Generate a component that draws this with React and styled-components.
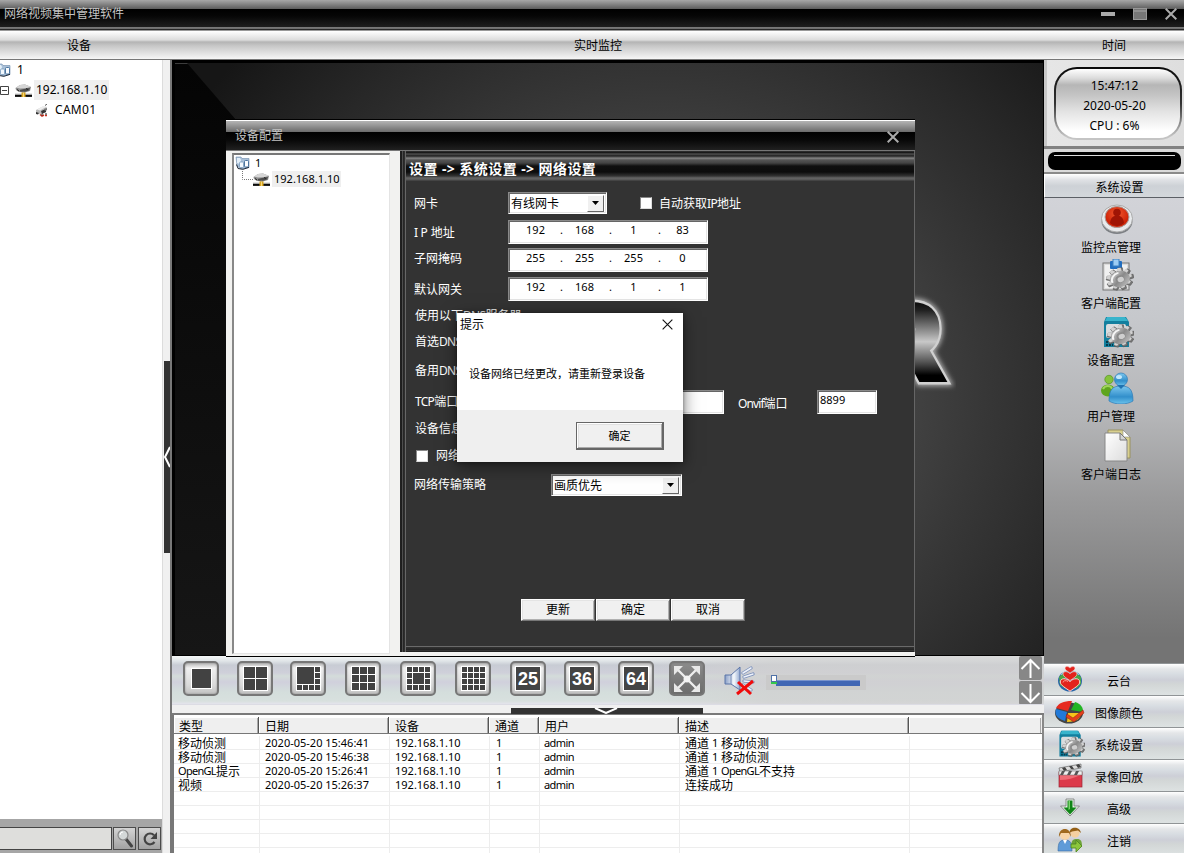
import React from "react";
import styled, { createGlobalStyle } from "styled-components";

const Global = createGlobalStyle`
  *, *::before, *::after { box-sizing: border-box; }
  body { margin: 0; overflow: hidden; }
  svg { display: block; flex: none; }
`;

const Shell = styled.div`
  width: 1184px;
  height: 853px;
  overflow: hidden;
  display: flex;
  flex-direction: column;
  position: relative;
  background: #fff;
  color: #000;
  font: 12px/14px "Noto Sans", "Noto Sans CJK SC", sans-serif;
  white-space: nowrap;
`;

/* ---------- top bars ---------- */
const TitleBar = styled.header`
  height: 31px;
  flex: none;
  display: flex;
  align-items: flex-start;
  justify-content: space-between;
  padding: 7px 7px 0 4px;
  color: #c4c4c4;
  background: linear-gradient(#a8a8a8 0, #5c5c5c 9px, #000 9px, #060606 16px, #1e1e1e 27px, #7c7c7c 27px, #6a6a6a 29px, #1c1c1c 29px, #333 30px, #999 30px);
`;
const WindowControls = styled.div`
  display: flex;
  gap: 18px;
  padding-top: 1px;
`;
const HeaderBar = styled.div`
  height: 29px;
  flex: none;
  display: flex;
  align-items: center;
  padding: 1px 0 0 1px;
  border-bottom: 1px solid #777;
  background: linear-gradient(#fff 0, #dcdcdc 9px, #b4b4b4 11px, #c8c8c8 15px, #f6f6f6 28px);
`;
const HeaderCell = styled.div`
  width: ${(p) => p.$w}px;
  flex: none;
  text-align: center;
`;
const Main = styled.div`
  display: flex;
  height: 793px;
`;

/* ---------- left column ---------- */
const LeftColumn = styled.aside`
  width: 172px;
  flex: none;
  display: flex;
`;
const LeftPanel = styled.div`
  width: 162px;
  display: flex;
  flex-direction: column;
`;
const Tree = styled.div`
  flex: 1;
`;
const TreeRow = styled.div`
  height: ${(p) => p.$h || 20}px;
  padding-left: ${(p) => p.$indent || 0}px;
  display: flex;
  align-items: center;
`;
const TreeLabel = styled.span`
  height: ${(p) => p.$h || 20}px;
  line-height: ${(p) => (p.$h || 20) - 1}px;
  padding: 0 2px;
  margin-left: ${(p) => p.$gap || 0}px;
  font-size: ${(p) => p.$size || 12}px;
  letter-spacing: ${(p) => p.$ls || 0}px;
  background: ${(p) => (p.$selected ? "#efefef" : "transparent")};
`;
const ClippedIcon = styled.span`
  margin-left: -4px;
`;
const DeviceSlot = styled.span`
  margin-left: 6px;
`;
const SearchBar = styled.div`
  height: 34px;
  padding: 8px 0 3px;
  display: flex;
  gap: 1px;
  background: #a6a6a6;
`;
const SearchField = styled.div`
  width: 112px;
  border: 1px solid #444;
  border-left: 0;
  background: #dededc;
`;
const SearchButton = styled.div`
  width: 23px;
  margin-right: 1px;
  border: 1px solid #4c4c4c;
  background: linear-gradient(#d4d4d4, #a2a2a2);
  display: flex;
  align-items: center;
  justify-content: center;
`;
const VSplitter = styled.div`
  width: 10px;
  background: #f0f0f0;
  border-left: 1px solid #dcdcdc;
  border-right: 2px solid #777;
  padding: 301px 0 0 1px;
`;
const VHandle = styled.div`
  width: 6px;
  height: 192px;
  background: #333;
  display: flex;
  align-items: center;
`;

/* ---------- centre column ---------- */
const Centre = styled.main`
  width: 872px;
  flex: none;
  display: flex;
  flex-direction: column;
`;
const Video = styled.div`
  height: 596px;
  flex: none;
  position: relative;
  border: 1px solid #000;
  border-width: 3px 1px 1px 3px;
  background: radial-gradient(ellipse 64% 88% at 56% 56%, #4c4c4c 0, #444 42%, #373737 58%, #282828 78%, #161616 100%);
  &::before {
    content: "";
    position: absolute;
    inset: 0;
    border-top: 1px solid #3c3c3c;
    background: linear-gradient(#040404, #161616);
    clip-path: polygon(0 0, 12px 0, 62px 58px, 62px 100%, 0 100%);
  }
`;
const Logo = styled.svg`
  position: absolute;
  left: 700px;
  top: 205px;
`;
const Toolbar = styled.div`
  height: 48px;
  flex: none;
  display: flex;
  align-items: flex-start;
  padding: 5px 0 0 11px;
  background:
    linear-gradient(90deg, transparent 450px, rgba(208, 208, 208, 0.75) 600px),
    linear-gradient(#f6f8f8 0, #e0e5e8 5px, #c8ccd4 9px, #cfd0da 17px, #d4dcda 20px, #d0d0dc 26px, #d4dedc 36px, #d8e0de 45px, #e4e4ec 48px);
`;
const LayoutButton = styled.div`
  width: 36px;
  height: 35px;
  flex: none;
  margin-right: ${(p) => p.$gap}px;
  border: 2px solid #777;
  border-radius: 5px;
  display: flex;
  align-items: center;
  justify-content: center;
  background: ${(p) => (p.$dark ? "linear-gradient(#8c8c8c, #6c6c6c)" : "linear-gradient(#b8b8b8 0, #f0f0f0 5px, #dadada 22px, #c2c2c2)")};
  box-shadow: inset 0 0 2px ${(p) => (p.$dark ? "#777" : "#888")};
`;
const CountTile = styled.span`
  width: 26px;
  height: 25px;
  border: 1px solid #fff;
  background: #444;
  color: #fff;
  font: bold 18px/24px "Liberation Sans", sans-serif;
  text-align: center;
`;
const MuteWrap = styled.span`
  padding-top: 4px;
`;
const Volume = styled.div`
  width: 100px;
  height: 15px;
  margin: 14px 0 0 11px;
  padding: 0 6px 0 5px;
  background: #cacaca;
  display: flex;
`;
const Scrollers = styled.div`
  margin: -5px 2px 0 auto;
  display: flex;
  flex-direction: column;
  gap: 1px;
`;
const ScrollerButton = styled.div`
  width: 23px;
  height: 24px;
  border-radius: 2px;
  background: #878787;
  display: flex;
  align-items: center;
  justify-content: center;
`;
const HSplitter = styled.div`
  height: 11px;
  flex: none;
  padding: 3px 0 0 339px;
  border-top: 1px solid #dcdce4;
  border-bottom: 2px solid #7a7a7a;
  background: #f0f0f0;
`;
const HHandle = styled.div`
  width: 192px;
  height: 6px;
  padding-right: 3px;
  background: #333;
  display: flex;
  justify-content: center;
`;
const LogTable = styled.div`
  flex: 1;
  border-left: 2px solid #777;
  border-right: 2px solid #888;
  background: #fff;
  padding-top: 2px;
  overflow: hidden;
`;
const LogHead = styled.div`
  display: flex;
  height: 17px;
  margin-bottom: 2px;
  background: #efefef;
  border-bottom: 1px solid #777;
`;
const HeadCell = styled.div`
  width: ${(p) => p.$w}px;
  padding-left: ${(p) => p.$pad || 6}px;
  line-height: 19px;
  flex: none;
  border-right: ${(p) => (p.$last ? 0 : 1)}px solid #555;
  box-shadow: inset 1px 1px #fff, inset -1px 0 #aaa;
`;
const LogRow = styled.div`
  display: flex;
  height: 14px;
  border-bottom: 1px solid #ededed;
  font-size: 11px;
`;
const LogCell = styled.div`
  width: ${(p) => p.$w}px;
  flex: none;
  padding-left: ${(p) => p.$pad || 5}px;
  border-right: 1px solid ${(p) => (p.$last ? "transparent" : "#ededed")};
  line-height: 14px;
`;
const Cjk = styled.span`
  font-size: 12px;
  line-height: 1px;
  vertical-align: -1px;
`;
const Tight = styled.span`
  letter-spacing: ${(p) => p.$ls || -0.7}px;
`;

/* ---------- right column ---------- */
const RightColumn = styled.aside`
  width: 140px;
  flex: none;
  display: flex;
  flex-direction: column;
`;
const ClockPanel = styled.div`
  height: 89px;
  flex: none;
  padding: 7px 2px 0 10px;
  background: linear-gradient(90deg, #c8c8c8 3px, #e6e6e6 3px, #dedede);
  border-bottom: 3px solid #828282;
`;
const Clock = styled.div`
  width: 128px;
  height: 73px;
  padding: 2px;
  border-radius: 23px;
  background: linear-gradient(#0a0a0a, #333 50%, #c4c4c4 95%);
`;
const ClockFace = styled.div`
  height: 69px;
  border-radius: 21px;
  padding: 7px 7px 0 0;
  line-height: 20px;
  text-align: center;
  background: linear-gradient(#fff 0, #dcdcdc 9px, #b6b6b6 16px, #c4c4c4 26px, #e2e2e2 42px, #fff 62px);
`;
const StatusStrip = styled.div`
  height: 25px;
  flex: none;
  padding: 3px 3px 0 4px;
  background: #dadada;
  border-bottom: 2px solid #8a8a8a;
`;
const StatusPill = styled.div`
  height: 18px;
  border-radius: 7px;
  background: #000;
  padding: 3px 6px;
  &::before {
    content: "";
    display: block;
    height: 1px;
    background: #ddd;
  }
`;
const SectionTitle = styled.div`
  height: 24px;
  flex: none;
  padding-left: 10px;
  line-height: 28px;
  text-align: center;
  border-bottom: 1px solid #5c6066;
  border-left: 1px solid #fff;
  background: linear-gradient(#fff 0, #dfe1e5 6px, #cdd1d6 12px, #d4d8dc);
`;
const ToolList = styled.nav`
  height: 465px;
  flex: none;
  display: flex;
  flex-direction: column;
  align-items: center;
  padding: 5px 6px 0 0;
  background: linear-gradient(#d2d3d8 0, #c6c8cc 120px, #b4b5b7 220px, #9a9a9b 300px, #747474 440px, #747474);
`;
const ToolItem = styled.div`
  height: 56.4px;
  display: flex;
  flex-direction: column;
  align-items: center;
  gap: 6px;
  & > svg { margin-left: 12px; }
`;
const MenuItem = styled.div`
  height: 32px;
  flex: none;
  display: flex;
  align-items: center;
  padding-left: 9px;
  border-top: 1px solid #909496;
  background: linear-gradient(#fff 0, #e4e6e8 5px, #d8dde2 10px, #cdcfd7 16px, #d2d6d6 20px, #dde2e2);
`;
const MenuText = styled.span`
  width: 64px;
  margin-top: 4px;
  text-align: center;
`;
const MenuIcon = styled.span`
  width: 34px;
  display: flex;
  justify-content: center;
`;

/* ---------- device dialog ---------- */
const Dialog = styled.section`
  position: absolute;
  left: 226px;
  top: 119px;
  width: 689px;
  height: 538px;
  display: flex;
  flex-direction: column;
  background: #f2f2f0;
  border-top: 1px solid #000;
  border-bottom: 1px solid #000;
`;
const DialogTitle = styled.div`
  height: 31px;
  flex: none;
  display: flex;
  justify-content: space-between;
  padding: 9px 16px 0 9px;
  color: #c4c4c4;
  background: linear-gradient(#fff 0, #fff 1px, #b4b4b4 1px, #6a6a6a 12px, #000 12px, #080808 20px, #202020 30px, #777 30px);
`;
const CloseSlot = styled.span`
  padding-top: ${(p) => p.$top || 2}px;
`;
const DialogBody = styled.div`
  flex: 1;
  display: flex;
`;
const DialogTree = styled.div`
  width: 158px;
  height: 501px;
  flex: none;
  margin: 2px 10px 0 6px;
  background: #fff;
  border: 1px solid #e4e4e4;
  border-left: 2px solid #888;
  border-top: 2px solid #777;
`;
const Form = styled.div`
  flex: 1;
  height: 501px;
  padding-left: 5px;
  background: linear-gradient(90deg, #222 0, #1c1c1c 2px, #555 2px, #444 3px, #222 3px, #333 5px);
  border-right: 1px solid #666;
`;
const FormInner = styled.div`
  height: 501px;
  display: flex;
  flex-direction: column;
  border-left: 1px solid #666;
  background:
    linear-gradient(#6a6a6a 0, #6a6a6a 1px, #333 1px, #222 4px, #555 4px, #111 5px, #333 6px) 0 495px / 100% 6px no-repeat,
    #333;
`;
const FormHeading = styled.div`
  height: 30px;
  flex: none;
  padding: 9px 0 0 3px;
  line-height: 18px;
  font-size: 14px;
  font-weight: bold;
  letter-spacing: 0.43px;
  color: #fff;
  background: linear-gradient(#333 0, #111 2px, #666 3px, #222 4px, #444 6px, #8a8a8a 7px, #555 9px, #444 12px, #101010 15px, #0c0c0c 21px, #333 25px, #666 27px, #555 29px, #333 30px);
`;
const FormRow = styled.div`
  height: ${(p) => p.$h}px;
  margin-top: ${(p) => p.$mt || 0}px;
  flex: none;
  display: flex;
  align-items: center;
  padding-left: 8px;
  color: #fff;
`;
const Label = styled.span`
  width: ${(p) => p.$w}px;
  margin-left: ${(p) => p.$ml || 0}px;
  margin-top: ${(p) => p.$mt || 0}px;
  flex: none;
`;
const Field = styled.div`
  width: ${(p) => p.$w}px;
  height: 24px;
  flex: none;
  display: flex;
  align-items: center;
  padding: 0 1px 4px 2px;
  color: #000;
  background: #fff;
  border: 1px solid #fff;
  border-top-color: #8a8a8a;
  border-left-color: #8a8a8a;
  box-shadow: inset 1px 1px #666, inset -1px -1px #e4e4e4;
  font-size: 11px;
`;
const Octet = styled.span`
  width: 49px;
  flex: none;
  text-align: center;
  position: relative;
  &:not(:last-child)::after {
    content: ".";
    position: absolute;
    right: -3px;
  }
`;
const Select = styled.div`
  width: ${(p) => p.$w}px;
  height: 22px;
  flex: none;
  display: flex;
  align-items: center;
  justify-content: space-between;
  padding: 1px 2px 1px 2px;
  color: #000;
  background: #fff;
  border: 1px solid #fff;
  border-top-color: #8a8a8a;
  border-left-color: #8a8a8a;
  box-shadow: inset 1px 1px #666, inset -1px -1px #e4e4e4;
`;
const SelectText = styled.span`
  padding-top: 2px;
`;
const SelectArrow = styled.span`
  width: 17px;
  height: 17px;
  display: flex;
  align-items: center;
  justify-content: center;
  background: #f0f0f0;
  border: 1px solid #fff;
  border-right-color: #666;
  border-bottom-color: #666;
`;
const Check = styled.span`
  width: 12px;
  height: 12px;
  flex: none;
  margin-left: ${(p) => p.$ml || 0}px;
  background: #fff;
  border: 1px solid #888;
  border-right-color: #ddd;
  border-bottom-color: #ddd;
`;
const ButtonRow = styled.div`
  display: flex;
  gap: 1px;
  margin: 101px 0 0 115px;
`;
const FormButton = styled.button`
  width: 74px;
  height: 22px;
  padding: 0;
  font: inherit;
  line-height: 20px;
  color: #000;
  background: #f0f0f0;
  border: 1px solid #fff;
  border-right-color: #666;
  border-bottom-color: #777;
  border-radius: 0;
  box-shadow: inset 1px 1px #e4e4e4, inset -1px -1px #b0b0b0;
`;

/* ---------- message box ---------- */
const MessageBox = styled.section`
  position: absolute;
  left: 457px;
  top: 313px;
  width: 226px;
  height: 149px;
  display: flex;
  flex-direction: column;
  background: #fff;
  box-shadow: 0 4px 16px rgba(0, 0, 0, 0.5), 0 0 4px rgba(0, 0, 0, 0.4);
`;
const MessageTitle = styled.div`
  display: flex;
  justify-content: space-between;
  padding: 5px 10px 0 3px;
`;
const MessageText = styled.p`
  flex: 1;
  margin: 0;
  padding: 35px 0 0 12px;
  font-size: 11px;
`;
const MessageFooter = styled.div`
  height: 52px;
  padding: 12px 19px 0 0;
  display: flex;
  justify-content: flex-end;
  background: #efefef;
`;
const MessageButton = styled.button`
  width: 88px;
  height: 28px;
  padding: 0;
  font: inherit;
  font-size: 11px;
  color: #000;
  background: #f0f0f0;
  border: 1px solid #666;
  border-right-width: 2px;
  border-bottom-width: 2px;
  border-radius: 0;
  box-shadow: inset 1px 1px #fff, inset -1px -1px #aaa, inset 2px 2px #e0e0e0;
`;

/* ---------- icons ---------- */
const CloseIcon = ({ size = 12, color = "#aaa", w = 2 }) => (
  <svg width={size} height={size} viewBox="0 0 12 12">
    <path d="M.7 .7 11.3 11.3M11.3 .7.7 11.3" stroke={color} strokeWidth={w} fill="none" />
  </svg>
);
const GroupIcon = () => (
  <svg width="15" height="14" viewBox="0 0 15 14">
    <path d="M1 1h5l1 1.500h7v9l-8 1.500-4-3z" fill="#a9c0d8" stroke="#6f8cab" strokeWidth=".6" />
    <path d="M2 2h3l1 2-1 4-3-1z" fill="#e2eef8" />
    <rect x="4.500" y="6" width="4" height="5.500" rx="1" fill="#f2f8fd" stroke="#6c8fb5" strokeWidth=".7" />
    <rect x="9.500" y="4.500" width="4" height="6.500" rx="1" fill="#fbfdff" stroke="#3d6a96" strokeWidth=".9" />
    <path d="M1.500 8.500 3 12.500l5 .8 6-2" stroke="#1f2a38" fill="none" />
  </svg>
);
const DeviceIcon = () => (
  <svg width="17" height="15" viewBox="0 0 17 15">
    <path d="M.5 5 5 2l5-.5 6 2.500-1 4-5 1.500-6-.5-3-2z" fill="#8d8d8d" />
    <path d="M1 4.500 5 2l5-.5 6 2.300-5 1.400-6 .3z" fill="#d6d6d6" />
    <path d="m5 7 4-1 6-1-1 2.500-5 1.500-4-.5z" fill="#4c4c4c" />
    <path d="M2 6.500 4 8M11 5.500l2 1" stroke="#222" />
    <path d="M8.500 8.500v3" stroke="#888" strokeWidth="2" />
    <path d="M0 11h17" stroke="#c9c9c9" strokeWidth="1" />
    <path d="M0 12.800h17" stroke="#0c0c0c" strokeWidth="2.200" />
    <rect x="6.500" y="9.500" width="4" height="4.500" fill="#d9a520" />
    <path d="M8.500 9.500V14" stroke="#f5d77a" />
  </svg>
);
const CameraIcon = () => (
  <svg width="14" height="13" viewBox="0 0 14 13">
    <path d="m1 6 7-3.500 4 1L11 8l-6 2-4-1.500z" fill="#b9b9b9" />
    <path d="m2 5.500 6-3.500 4 .5-7 4z" fill="#ededed" />
    <path d="m10 1.500 2-1.500" stroke="#555" />
    <path d="m6 7 5-2v3l-4 2zM1 8l3 1-1 1.500L1 10z" fill="#333" />
    <path d="m9 5 3-1v2l-2 1z" fill="#777" />
    <path d="M5 10.500 7 12l2-1M10 11.500h2" stroke="#c8321f" strokeWidth="1.500" fill="none" />
    <path d="M7 9.500v2M11 9v2" stroke="#222" />
  </svg>
);
const ExpandIcon = () => (
  <svg width="9" height="9" viewBox="0 0 9 9">
    <path d="M.5 .5h8v8h-8zM2 4.500h5" fill="none" stroke="#444" />
  </svg>
);
const SearchIcon = () => (
  <svg width="18" height="19" viewBox="0 0 18 19">
    <path d="m10 10 5.500 7" stroke="#444" strokeWidth="3" strokeLinecap="round" />
    <circle cx="7" cy="6" r="5" fill="#d4d8d8" stroke="#888" strokeWidth="1.200" />
    <path d="M4 6a3 3 0 0 1 3-3" stroke="#fff" fill="none" />
  </svg>
);
const RefreshIcon = () => (
  <svg width="16" height="16" viewBox="0 0 16 16">
    <path d="M12.500 11A5.400 5.400 0 1 1 12 4.200" fill="none" stroke="#444" strokeWidth="2.200" />
    <path d="M15 1v7H8.500z" fill="#444" />
  </svg>
);
const rect = (x, y, w, h) => ({ x, y, w, h });
const uniform = (n, size) => {
  const out = [];
  const cell = (size - (n - 1)) / n;
  for (let r = 0; r < n; r++)
    for (let c = 0; c < n; c++) out.push(rect(c * (cell + 1), r * (cell + 1), cell, cell));
  return out;
};
const eight = [rect(0, 0, 17, 17)];
const thirteen = [rect(6, 6, 11, 11)];
for (let i = 0; i < 4; i++) {
  eight.push(rect(i * 6, 18, 5, 5));
  if (i < 3) eight.push(rect(18, i * 6, 5, 5));
  thirteen.push(rect(i * 6, 0, 5, 5), rect(i * 6, 18, 5, 5));
  if (i === 1 || i === 2) thirteen.push(rect(0, i * 6, 5, 5), rect(18, i * 6, 5, 5));
}
const GridIcon = ({ cells, size = 23 }) => (
  <svg width={size + 2} height={size + 2} viewBox={`0 0 ${size + 2} ${size + 2}`}>
    <rect width={size + 2} height={size + 2} fill="#fff" />
    {cells.map((c, i) => (
      <rect key={i} x={c.x + 1} y={c.y + 1} width={c.w} height={c.h} fill="#424242" />
    ))}
  </svg>
);
const FullscreenIcon = () => (
  <svg width="30" height="28" viewBox="0 0 30 28">
    <path d="m5 4 20 20M25 4 5 24" stroke="#eee" strokeWidth="2.400" />
    <path d="M2 1h9L8 4 5 7 2 10zM28 1h-9l3 3 3 3 3 3zM2 27h9l-3-3-3-3-3-3zM28 27h-9l3-3 3-3 3-3z" fill="#e8e8e8" />
    <circle cx="15" cy="14" r="3.500" fill="#f4f4f4" />
  </svg>
);
const MuteIcon = () => (
  <svg width="32" height="32" viewBox="0 0 32 32">
    <defs>
      <linearGradient id="spk" x2="1"><stop stopColor="#8ba0c8" /><stop offset=".6" stopColor="#f5f8fc" /><stop offset="1" stopColor="#93a9d0" /></linearGradient>
    </defs>
    <path d="M2 10h6l9-8v23l-9-6H2z" fill="url(#spk)" stroke="#5b75a8" />
    <path d="M8 10v9" stroke="#7288b4" />
    <path d="m20 8 8-5M21 12l9-3M21 16l9 1M20 20l8 5" stroke="#7b90ba" strokeWidth="3.200" strokeLinecap="round" />
    <path d="m20 8 8-5M21 12l9-3M21 16l9 1M20 20l8 5" stroke="#eef2fa" strokeWidth="1.500" strokeLinecap="round" />
    <path d="m15 17 13 12M30 16 14 29" stroke="#f00b0b" strokeWidth="3" />
  </svg>
);
const SliderArt = () => (
  <svg width="90" height="15" viewBox="0 0 90 15">
    <rect x="5" y="5" width="84" height="6" fill="#4166b4" />
    <path d="M5 5.500h84" stroke="#7892cc" />
    <rect x=".5" y=".5" width="5" height="6" fill="#fff" stroke="#4f72a8" />
    <rect x="0" y="7" width="6" height="2" fill="#35c84c" />
  </svg>
);
const ArrowIcon = ({ down }) => (
  <svg width="21" height="21" viewBox="0 0 21 21">
    <path d={down ? "M10.500 1v18M1.500 10l9 9 9-9" : "M10.500 20V2M1.500 11l9-9 9 9"} stroke="#fff" strokeWidth="2" fill="none" />
  </svg>
);
const gearTeeth = Array.from({ length: 9 }, (_, i) => i * 40);
const Gear = ({ x, y, r = 9 }) => (
  <g transform={`translate(${x} ${y}) rotate(-14) scale(${r / 10} ${r / 12.5})`}>
    {gearTeeth.map((a) => (
      <path key={a} d="M-2.400-7-1.800-11H1.800L2.400-7z" transform={`rotate(${a + 12})`} fill="#777" stroke="#555" strokeWidth=".5" />
    ))}
    {gearTeeth.map((a) => (
      <path key={a} d="M-2.200-7-1.400-10.300H1.200L2-7z" transform={`translate(-.6 -1) rotate(${a + 12})`} fill="#d2d2d2" />
    ))}
    <circle r="8" fill="url(#metal)" />
    <path d="M-6.500 2A7 7 0 0 1 0-6.500" stroke="#f6f6f6" strokeWidth="1.600" fill="none" />
    <circle r="3.600" fill="#8a8a8a" />
    <circle cx=".5" cy=".6" r="2.600" fill="#cfcfcf" />
  </g>
);
const MonitorIcon = () => (
  <svg width="34" height="32" viewBox="0 0 34 32">
    <ellipse cx="17" cy="18" rx="15.500" ry="13" fill="#7d8084" />
    <ellipse cx="17" cy="15.500" rx="15.500" ry="13.500" fill="#e8eaec" stroke="#aaa" />
    <ellipse cx="17" cy="14" rx="12" ry="10.500" fill="url(#redg)" stroke="#a7a09e" />
    <circle cx="17" cy="9.500" r="3.800" fill="#a01505" />
    <path d="M10 20c1-7 4-7 7-7s6 0 7 7c-4 4-10 4-14 0z" fill="#a01505" />
  </svg>
);
const ClientConfigIcon = () => (
  <svg width="34" height="32" viewBox="0 0 34 32">
    <rect x="3" y="4" width="26" height="27" fill="#dcdcdc" stroke="#777" />
    <rect x="5" y="6" width="22" height="23" fill="#f0f0f0" />
    <rect x="10" y="2" width="12" height="8" rx="1" fill="#226ec0" />
    <rect x="13" y="0" width="6" height="7" fill="#9cccf4" stroke="#3c80c0" />
    <Gear x={20} y={20} r={12.5} />
  </svg>
);
const DeviceConfigIcon = ({ size = 34 }) => (
  <svg width={size} height={size * 0.94} viewBox="0 0 34 32">
    <path d="M4 6 6 1h20l3 5v25H4z" fill="#137f9e" />
    <path d="M5 5 7 1h18l3 4z" fill="#38b4cc" />
    <rect x="6" y="8" width="20" height="14" rx="2" fill="#dadddf" />
    <path d="M6 26h9M6 29h7" stroke="#063a4c" strokeWidth="2" strokeDasharray="2 1" />
    <Gear x={21} y={20} r={12.5} />
  </svg>
);
const UsersIcon = () => (
  <svg width="34" height="32" viewBox="0 0 34 32">
    <ellipse cx="8" cy="18.500" rx="7" ry="6" fill="#5ea51e" />
    <path d="M3 17c2-4 8-4 9 0" stroke="#9fd45c" strokeWidth="2" fill="none" />
    <circle cx="9" cy="7.500" r="4.200" fill="#85c33c" stroke="#4c8b1a" strokeWidth=".6" />
    <path d="M9 29c0-12 4-15 12-15s12 3 12 15c-6 4-18 4-24 0z" fill="url(#blueg)" stroke="#2b7ab8" strokeWidth=".7" />
    <circle cx="21" cy="7.500" r="6.500" fill="url(#blueg)" stroke="#2b7ab8" strokeWidth=".7" />
    <path d="m17 13 4 4 4-4" fill="#1f72b0" />
    <ellipse cx="19" cy="5" rx="3" ry="2" fill="#c3e8fb" />
  </svg>
);
const DocsIcon = () => (
  <svg width="34" height="33" viewBox="0 0 34 33">
    <path d="M8 1h15l7 7v21H8z" fill="#d8cf8e" stroke="#9a925e" />
    <path d="M23 1v7h7z" fill="#fff" stroke="#888" strokeWidth=".6" />
    <path d="M5 4h15l7 7v21H5z" fill="url(#paper)" stroke="#888" />
    <path d="M20 4v7h7z" fill="#d4d4d4" stroke="#777" />
  </svg>
);
const HeartGlobeIcon = () => (
  <svg width="26" height="27" viewBox="0 0 26 27">
    <ellipse cx="13" cy="15" rx="12" ry="10.500" fill="#2a66a8" />
    <path d="m2 11 5-5 3 4-4 6 3 7-6-4zM18 6l6 5v7l-5 5-2-7z" fill="#4aa548" />
    <path d="M4 9c3-5 14-6 18 0" stroke="#8fc4e8" fill="none" />
    {[[0.5, 1], [5.5, 1.4], [12.5, 1.95]].map(([y, s]) => (
      <path key={y} transform={`translate(13 ${y}) scale(${s})`} d="M0 6.500C-2 5-5 3.500-5 1.800-5-.2-2-.6 0 1.600 2-.6 5-.2 5 1.800 5 3.500 2 5 0 6.500z" fill="#e3231c" stroke="#ffd9d4" strokeWidth=".5" />
    ))}
    <path d="M6 16.500c0-2 3-2.500 5-1" stroke="#ff9a90" fill="none" />
  </svg>
);
const PaletteIcon = () => (
  <svg width="30" height="24" viewBox="0 0 30 24">
    <ellipse cx="14" cy="13" rx="14" ry="10.500" fill="#444" />
    <path d="M13 11 1 8C4 3 8 1 17 1z" fill="#e62a20" />
    <path d="m16 10 4-8c6 2 8 5 8 10z" fill="#22b524" />
    <path d="M12 12 1 9c-2 6 2 10 9 12z" fill="#2179d8" />
    <path d="m13 13 13 0c0 5-4 9-14 9z" fill="#f5c51a" />
    <path d="m12 14 6 4 10-8 1 3-10 9-8-5z" fill="#e4401c" stroke="#8c1c0c" strokeWidth=".5" />
  </svg>
);
const ClapperIcon = () => (
  <svg width="25" height="25" viewBox="0 0 25 25">
    <path d="m1 5 22-4v4L2 9z" fill="#ddd" stroke="#555" strokeWidth=".6" />
    <path d="m4 5 3-1 2 3-3 1zM11 3l3 0 2 3-3 0zM18 2l3-1 2 3-3 1z" fill="#444" />
    <rect x="1" y="9" width="23" height="15" fill="#dc3a4a" stroke="#992634" strokeWidth=".7" />
    <path d="M2 17c7 0 14-2 21-5v-2H2z" fill="#ee6a74" />
    <rect x="1" y="8" width="23" height="4" fill="#eee" stroke="#666" strokeWidth=".5" />
    <path d="m4 8-2 4h3l2-4zM11 8l-2 4h3l2-4zM18 8l-2 4h3l2-4z" fill="#555" />
  </svg>
);
const DownIcon = () => (
  <svg width="22" height="19" viewBox="0 0 22 19">
    <path d="M7 1h8v7h5.500L11 18 1.500 8H7z" fill="#e8f2e8" stroke="#777" strokeWidth=".8" />
    <path d="M8.500 2.500h5v7h4L11 16.500 4.500 9.500h4z" fill="#0f8416" />
    <path d="M9.500 3h1.500v8l-1.500 1z" fill="#7ad46c" />
  </svg>
);
const LogoutIcon = () => (
  <svg width="26" height="25" viewBox="0 0 26 25">
    <path d="M14 21c0-8 2-9 6-9s5 2 5 8z" fill="#6ea338" />
    <circle cx="18" cy="6" r="4.700" fill="#f5d0a0" />
    <path d="M12.500 6c0-7 10.500-7 11.500 0l-3-2.500-6 1z" fill="#946016" />
    <path d="M1 24c0-9 2-11 7-11s7 2 7 11z" fill="#5f9bd8" stroke="#3a6ca4" strokeWidth=".6" />
    <circle cx="8" cy="8" r="5" fill="#f8d5a8" />
    <path d="M2 10c-1-10 12-11 12 0l-2-4-8 0z" fill="#a06a20" />
    <path d="m6 13 2 4 2-4z" fill="#fff" />
    <path d="M14 17h5v-4l6 6-6 6v-4h-5z" fill="#8cc63c" stroke="#4b8420" strokeWidth=".8" />
  </svg>
);
const Hidden = styled.svg`
  position: absolute;
`;
const SharedDefs = () => (
  <Hidden width="0" height="0">
    <defs>
      <linearGradient id="metal" x2="1" y2="1"><stop stopColor="#e4e4e4" /><stop offset=".5" stopColor="#8a8a8a" /><stop offset="1" stopColor="#c8c8c8" /></linearGradient>
      <radialGradient id="redg" cy=".35"><stop stopColor="#f25a30" /><stop offset="1" stopColor="#cf2408" /></radialGradient>
      <linearGradient id="blueg" x2="0" y2="1"><stop stopColor="#7cc7ee" /><stop offset=".6" stopColor="#328fcb" /><stop offset="1" stopColor="#6cc3ec" /></linearGradient>
      <linearGradient id="paper" x2="1" y2="1"><stop stopColor="#fff" /><stop offset="1" stopColor="#dcdcdc" /></linearGradient>
    </defs>
  </Hidden>
);

/* ---------- data ---------- */
const widths = [86, 130, 100, 50, 140, 230, 132];
const pads = [4, 5, 5, 6, 4, 5, 5];
const heads = ["类型", "日期", "设备", "通道", "用户", "描述", ""];
const admin = <Tight $ls={-0.6}>admin</Tight>;
const logs = [
  [<Cjk>移动侦测</Cjk>, "2020-05-20 15:46:41", "192.168.1.10", "1", admin, <><Cjk>通道</Cjk> 1 <Cjk>移动侦测</Cjk></>],
  [<Cjk>移动侦测</Cjk>, "2020-05-20 15:46:38", "192.168.1.10", "1", admin, <><Cjk>通道</Cjk> 1 <Cjk>移动侦测</Cjk></>],
  [<><Tight>OpenGL</Tight><Cjk>提示</Cjk></>, "2020-05-20 15:26:41", "192.168.1.10", "1", admin, <><Cjk>通道</Cjk> 1 <Tight>OpenGL</Tight><Cjk>不支持</Cjk></>],
  [<Cjk>视频</Cjk>, "2020-05-20 15:26:37", "192.168.1.10", "1", admin, <Cjk>连接成功</Cjk>],
  [], [], [], [], [],
];
const tools = [
  [MonitorIcon, "监控点管理"],
  [ClientConfigIcon, "客户端配置"],
  [DeviceConfigIcon, "设备配置"],
  [UsersIcon, "用户管理"],
  [DocsIcon, "客户端日志"],
];
const menu = [
  [<HeartGlobeIcon />, "云台"],
  [<PaletteIcon />, "图像颜色"],
  [<DeviceConfigIcon size={29} />, "系统设置"],
  [<ClapperIcon />, "录像回放"],
  [<DownIcon />, "高级"],
  [<LogoutIcon />, "注销"],
];
const layouts = [
  [<GridIcon cells={uniform(1, 19)} size={19} />, 18],
  [<GridIcon cells={uniform(2, 23)} />, 17],
  [<GridIcon cells={eight} />, 19],
  [<GridIcon cells={uniform(3, 23)} />, 19],
  [<GridIcon cells={thirteen} />, 19],
  [<GridIcon cells={uniform(4, 23)} />, 19],
  [<CountTile>25</CountTile>, 18],
  [<CountTile>36</CountTile>, 18],
  [<CountTile>64</CountTile>, 15],
];

const IpField = ({ value }) => (
  <Field $w={200}>
    {value.split(".").map((v, i) => (
      <Octet key={i}>{v}</Octet>
    ))}
  </Field>
);
const Dropdown = ({ w, children }) => (
  <Select $w={w}>
    <SelectText>{children}</SelectText>
    <SelectArrow>
      <svg width="7" height="4" viewBox="0 0 7 4"><path d="M0 0h7L3.500 4z" /></svg>
    </SelectArrow>
  </Select>
);

export default function App() {
  return (
    <Shell>
      <Global />
      <SharedDefs />
      <TitleBar>
        网络视频集中管理软件
        <WindowControls>
          <svg width="14" height="12"><rect y="4" width="14" height="4" fill="#aaa" /></svg>
          <svg width="14" height="12"><rect x=".5" y=".5" width="13" height="11" fill="#777" stroke="#999" /><path d="M1 3h12" stroke="#aaa" /></svg>
          <CloseIcon />
        </WindowControls>
      </TitleBar>
      <HeaderBar>
        <HeaderCell $w={156}>设备</HeaderCell>
        <HeaderCell $w={882}>实时监控</HeaderCell>
        <HeaderCell $w={150}>时间</HeaderCell>
      </HeaderBar>
      <Main>
        <LeftColumn>
          <LeftPanel>
            <Tree>
              <TreeRow><ClippedIcon><GroupIcon /></ClippedIcon><TreeLabel $gap={4}>1</TreeLabel></TreeRow>
              <TreeRow><ExpandIcon /><DeviceSlot><DeviceIcon /></DeviceSlot><TreeLabel $selected $gap={2}>192.168.1.10</TreeLabel></TreeRow>
              <TreeRow $indent={35}><CameraIcon /><TreeLabel $gap={4} $ls={0.3}>CAM01</TreeLabel></TreeRow>
            </Tree>
            <SearchBar>
              <SearchField />
              <SearchButton><SearchIcon /></SearchButton>
              <SearchButton><RefreshIcon /></SearchButton>
            </SearchBar>
          </LeftPanel>
          <VSplitter>
            <VHandle>
              <svg width="6" height="22" viewBox="0 0 6 22"><path d="M6 1 1 11l5 10" fill="none" stroke="#fff" strokeWidth="2" /></svg>
            </VHandle>
          </VSplitter>
        </LeftColumn>

        <Centre>
          <Video>
            <Logo width="120" height="140" viewBox="0 0 120 140">
              <defs>
                <linearGradient id="chrome" gradientUnits="userSpaceOnUse" x1="0" y1="30" x2="0" y2="114">
                  <stop stopColor="#000" /><stop offset=".15" stopColor="#222" /><stop offset=".52" stopColor="#c8c8c8" /><stop offset=".76" stopColor="#555" /><stop offset=".92" stopColor="#000" />
                </linearGradient>
                <filter id="glow" x="-30%" y="-30%" width="160%" height="160%"><feGaussianBlur stdDeviation="2.5" /></filter>
              </defs>
              <g fontFamily="Liberation Sans, sans-serif" fontWeight="bold" fontSize="96" strokeLinejoin="miter" strokeMiterlimit="3">
                <text x="3" y="107" textLength="60" lengthAdjust="spacingAndGlyphs" stroke="#fff" strokeOpacity=".6" strokeWidth="22" filter="url(#glow)">R</text>
                <text x="3" y="107" textLength="60" lengthAdjust="spacingAndGlyphs" stroke="#d0d0d0" strokeWidth="19">R</text>
                <text x="3" y="107" textLength="60" lengthAdjust="spacingAndGlyphs" stroke="url(#chrome)" strokeWidth="14" fill="url(#chrome)">R</text>
              </g>
            </Logo>
          </Video>
          <Toolbar>
            {layouts.map(([icon, gap], i) => (
              <LayoutButton key={i} $gap={gap}>{icon}</LayoutButton>
            ))}
            <LayoutButton $dark $gap={18}><FullscreenIcon /></LayoutButton>
            <MuteWrap><MuteIcon /></MuteWrap>
            <Volume><SliderArt /></Volume>
            <Scrollers>
              <ScrollerButton><ArrowIcon /></ScrollerButton>
              <ScrollerButton><ArrowIcon down /></ScrollerButton>
            </Scrollers>
          </Toolbar>
          <HSplitter>
            <HHandle>
              <svg width="24" height="6" viewBox="0 0 24 6"><path d="m1 0 11 5 11-5" fill="none" stroke="#fff" strokeWidth="2" /></svg>
            </HHandle>
          </HSplitter>
          <LogTable>
            <LogHead>
              {heads.map((h, i) => (
                <HeadCell key={i} $w={i === 0 ? widths[0] - 1 : widths[i]} $pad={i === 0 ? 5 : 6} $last={i === 6}>{h}</HeadCell>
              ))}
            </LogHead>
            {logs.map((row, r) => (
              <LogRow key={r}>
                {widths.map((w, c) => (
                  <LogCell key={c} $w={w} $pad={pads[c]} $last={c === 6}>{row[c]}</LogCell>
                ))}
              </LogRow>
            ))}
          </LogTable>
        </Centre>

        <RightColumn>
          <ClockPanel>
            <Clock>
              <ClockFace>
                <div>15:47:12</div>
                <div>2020-05-20</div>
                <div>CPU : 6%</div>
              </ClockFace>
            </Clock>
          </ClockPanel>
          <StatusStrip><StatusPill /></StatusStrip>
          <SectionTitle>系统设置</SectionTitle>
          <ToolList>
            {tools.map(([Icon, text]) => (
              <ToolItem key={text}><Icon />{text}</ToolItem>
            ))}
          </ToolList>
          {menu.map(([icon, text]) => (
            <MenuItem key={text}><MenuIcon>{icon}</MenuIcon><MenuText>{text}</MenuText></MenuItem>
          ))}
        </RightColumn>
      </Main>

      <Dialog>
        <DialogTitle>
          设备配置
          <CloseSlot><CloseIcon /></CloseSlot>
        </DialogTitle>
        <DialogBody>
          <DialogTree>
            <TreeRow $h={16} $indent={1}><GroupIcon /><TreeLabel $h={16} $size={11} $gap={3}>1</TreeLabel></TreeRow>
            <TreeRow $h={16} $indent={8}>
              <svg width="11" height="16"><path d="M.5 0v8.500H11" stroke="#777" strokeDasharray="1 1" fill="none" /></svg>
              <DeviceIcon />
              <TreeLabel $h={16} $size={11} $selected $gap={2}>192.168.1.10</TreeLabel>
            </TreeRow>
          </DialogTree>
          <Form>
            <FormInner>
              <FormHeading>设置 -&gt; 系统设置 -&gt; 网络设置</FormHeading>
              <FormRow $mt={8} $h={28}>
                <Label $w={94} $mt={2}>网卡</Label>
                <Dropdown w={99}>有线网卡</Dropdown>
                <Check $ml={33} />
                <Label $ml={7} $mt={2}>自动获取<Tight>IP</Tight>地址</Label>
              </FormRow>
              <FormRow $mt={1} $h={28}><Label $w={94} $mt={2}><Tight $ls={-0.3}>I P</Tight> 地址</Label><IpField value="192.168.1.83" /></FormRow>
              <FormRow $h={28}><Label $w={94} $mt={-3}>子网掩码</Label><IpField value="255.255.255.0" /></FormRow>
              <FormRow $mt={1} $h={28}><Label $w={94} $mt={2}>默认网关</Label><IpField value="192.168.1.1" /></FormRow>
              <FormRow $h={25}><Label $ml={1} $mt={1}>使用以下<Tight>DNS</Tight>服务器</Label></FormRow>
              <FormRow $h={27}><Label $ml={1}>首选<Tight>DNS</Tight>服务器</Label></FormRow>
              <FormRow $h={30}><Label $ml={1} $mt={2}>备用<Tight>DNS</Tight>服务器</Label></FormRow>
              <FormRow $mt={3} $h={28}>
                <Label $w={93} $ml={1}><Tight>TCP</Tight>端口</Label>
                <Field $w={216} />
                <Label $ml={14} $w={79} $mt={4}><Tight $ls={-0.9}>Onvif</Tight>端口</Label>
                <Field $w={60}>8899</Field>
              </FormRow>
              <FormRow $h={25}><Label $ml={1}>设备信息</Label></FormRow>
              <FormRow $mt={2} $h={25}><Check $ml={2} /><Label $ml={8} $mt={1}>网络</Label></FormRow>
              <FormRow $mt={4} $h={26}><Label $w={137}>网络传输策略</Label><Dropdown w={131}>画质优先</Dropdown></FormRow>
              <ButtonRow>
                <FormButton>更新</FormButton>
                <FormButton>确定</FormButton>
                <FormButton>取消</FormButton>
              </ButtonRow>
            </FormInner>
          </Form>
        </DialogBody>
      </Dialog>

      <MessageBox>
        <MessageTitle>
          提示
          <CloseSlot $top={1}><CloseIcon size={11} color="#111" w={1.2} /></CloseSlot>
        </MessageTitle>
        <MessageText>设备网络已经更改，请重新登录设备</MessageText>
        <MessageFooter><MessageButton>确定</MessageButton></MessageFooter>
      </MessageBox>
    </Shell>
  );
}
